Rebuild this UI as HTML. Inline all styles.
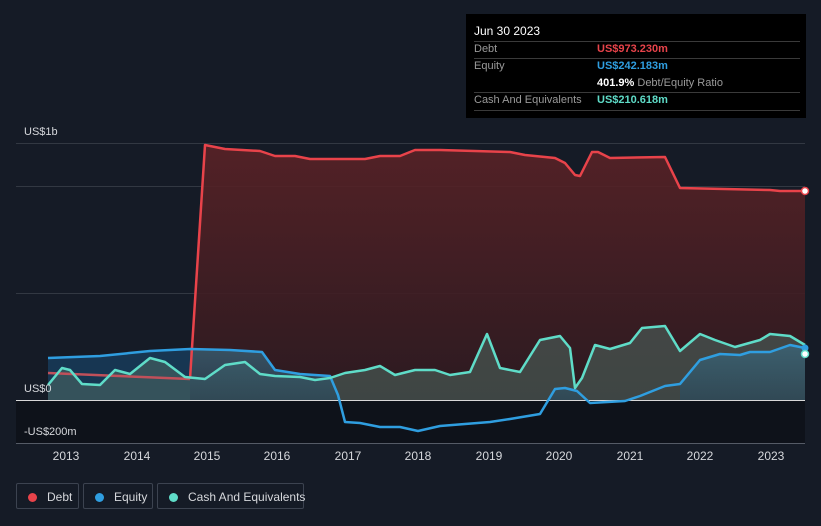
<!DOCTYPE html>
<html><head><meta charset="utf-8"><style>
body{margin:0;background:#151b26;width:821px;height:526px;overflow:hidden;font-family:"Liberation Sans",sans-serif;}
.tt{position:absolute;left:466px;top:14px;width:340px;height:104px;background:#000;color:#fff;font-size:11px;}
.tt .r{position:absolute;left:8px;right:6px;border-top:1px solid #3a3a3a;}
.lg{position:absolute;top:483px;height:26px;border:1px solid #3c4350;border-radius:2px;color:#d6d8dc;font-size:12px;line-height:26px;box-sizing:border-box;white-space:nowrap;}
.lg i{display:inline-block;width:9px;height:9px;border-radius:50%;margin:0 10px 0 11px;vertical-align:-1px;}
</style></head><body>
<svg width="821" height="526" style="position:absolute;left:0;top:0">
<defs>
<linearGradient id="dg" x1="0" y1="0" x2="0" y2="1"><stop offset="0" stop-color="#5a2226"/><stop offset="1" stop-color="#2e1a20"/></linearGradient>
<linearGradient id="eg" x1="0" y1="0" x2="0" y2="1"><stop offset="0" stop-color="#3a6a80"/><stop offset="1" stop-color="#2b4a5c"/></linearGradient>
</defs>
<rect x="16" y="400" width="789" height="43" fill="#0e121a"/>
<g stroke="#323842" stroke-width="1">
<line x1="16" y1="143.5" x2="805" y2="143.5"/><line x1="16" y1="186.5" x2="805" y2="186.5"/><line x1="16" y1="293.5" x2="805" y2="293.5"/>
</g>
<path d="M48,358 L100,356 L150,351 L190,349 L190,400 L48,400Z" fill="#173a58" opacity="0.9"/>
<path d="M190,379 L205,145 L225,149 L260,151 L275,156 L295,156 L310,159 L365,159 L380,156 L400,156 L415,150 L440,150 L510,152 L525,155 L555,158 L565,163 L575,175 L580,176 L592,152 L598,152 L610,158 L665,157 L680,188 L770,190 L780,191 L805,191 L805,400 L190,400Z" fill="url(#dg)" opacity="0.9"/>
<path d="M48,385 L62,368 L70,370 L82,384 L100,385 L115,370 L130,374 L150,358 L165,362 L185,377 L205,379 L225,365 L245,362 L260,374 L275,376 L300,377 L315,380 L330,378 L345,373 L365,370 L380,366 L395,375 L415,370 L435,370 L450,375 L470,372 L487,334 L500,368 L520,372 L540,340 L560,336 L570,348 L575,388 L582,378 L595,345 L610,349 L630,343 L642,328 L665,326 L680,351 L700,334 L715,340 L735,347 L760,340 L770,334 L790,336 L805,345 L805,400 L48,400Z" fill="#4f6a62" opacity="0.55"/>
<path d="M190,349 L230,350 L262,352 L275,370 L300,374 L330,376 L338,395 L338,400 L550,400 L555,389 L565,388 L577,391 L582,400 L680,400 L680,384 L700,360 L720,354 L740,355 L750,352 L770,352 L790,345 L805,348 L805,400 L190,400Z" fill="url(#eg)" opacity="0.7"/>
<line x1="16" y1="400.5" x2="805" y2="400.5" stroke="#d8d8d8" stroke-width="1"/>
<line x1="16" y1="443.5" x2="805" y2="443.5" stroke="#555b66"/>
<path d="M48,373 L190,379" fill="none" stroke="#c0505a" stroke-width="2.5"/>
<path d="M190,379 L205,145 L225,149 L260,151 L275,156 L295,156 L310,159 L365,159 L380,156 L400,156 L415,150 L440,150 L510,152 L525,155 L555,158 L565,163 L575,175 L580,176 L592,152 L598,152 L610,158 L665,157 L680,188 L770,190 L780,191 L805,191" fill="none" stroke="#e8434a" stroke-width="2.5" stroke-linejoin="round"/>
<path d="M48,358 L100,356 L150,351 L190,349 L230,350 L262,352 L275,370 L300,374 L330,376 L338,395 L345,422 L360,423 L380,427 L400,427 L418,431 L440,426 L490,422 L510,419 L540,414 L555,389 L565,388 L577,391 L590,403 L625,401 L640,396 L665,386 L680,384 L700,360 L720,354 L740,355 L750,352 L770,352 L790,345 L805,348" fill="none" stroke="#2f9ee0" stroke-width="2.5" stroke-linejoin="round"/>
<path d="M48,385 L62,368 L70,370 L82,384 L100,385 L115,370 L130,374 L150,358 L165,362 L185,377 L205,379 L225,365 L245,362 L260,374 L275,376 L300,377 L315,380 L330,378 L345,373 L365,370 L380,366 L395,375 L415,370 L435,370 L450,375 L470,372 L487,334 L500,368 L520,372 L540,340 L560,336 L570,348 L575,388 L582,378 L595,345 L610,349 L630,343 L642,328 L665,326 L680,351 L700,334 L715,340 L735,347 L760,340 L770,334 L790,336 L805,345" fill="none" stroke="#5fdcc8" stroke-width="2.5" stroke-linejoin="round"/>
<circle cx="805" cy="191" r="3.5" fill="#fff" stroke="#e8434a" stroke-width="1.5"/>
<circle cx="805" cy="348" r="3.5" fill="#2f9ee0"/>
<circle cx="805" cy="354" r="3.5" fill="#fff" stroke="#5fdcc8" stroke-width="1.5"/>
<g fill="#d6d8dc" font-size="11">
<text x="24" y="135">US$1b</text><text x="24" y="392">US$0</text><text x="24" y="435">-US$200m</text>
</g>
<g fill="#d6d8dc" font-size="12" text-anchor="middle">
<text x="66" y="460">2013</text><text x="137" y="460">2014</text><text x="207" y="460">2015</text><text x="277" y="460">2016</text><text x="348" y="460">2017</text><text x="418" y="460">2018</text><text x="489" y="460">2019</text><text x="559" y="460">2020</text><text x="630" y="460">2021</text><text x="700" y="460">2022</text><text x="771" y="460">2023</text>
</g>
</svg>
<div class="tt">
<div style="position:absolute;left:8px;top:10px;font-size:12px">Jun 30 2023</div>
<div class="r" style="top:27px"></div>
<div style="position:absolute;left:8px;top:29px;color:#9a9a9a">Debt</div><div style="position:absolute;left:131px;top:29px;color:#e8434a;font-weight:bold">US$973.230m</div>
<div class="r" style="top:44px"></div>
<div style="position:absolute;left:8px;top:46px;color:#9a9a9a">Equity</div><div style="position:absolute;left:131px;top:46px;color:#2f9ee0;font-weight:bold">US$242.183m</div>
<div style="position:absolute;left:131px;top:63px"><b>401.9%</b> <span style="color:#9a9a9a">Debt/Equity Ratio</span></div>
<div class="r" style="top:78px"></div>
<div style="position:absolute;left:8px;top:80px;color:#9a9a9a">Cash And Equivalents</div><div style="position:absolute;left:131px;top:80px;color:#5fdcc8;font-weight:bold">US$210.618m</div>
<div class="r" style="top:96px"></div>
</div>
<div class="lg" style="left:16px;width:63px"><i style="background:#e8434a"></i>Debt</div>
<div class="lg" style="left:83px;width:70px"><i style="background:#2f9ee0"></i>Equity</div>
<div class="lg" style="left:157px;width:147px"><i style="background:#5fdcc8"></i>Cash And Equivalents</div>
</body></html>
